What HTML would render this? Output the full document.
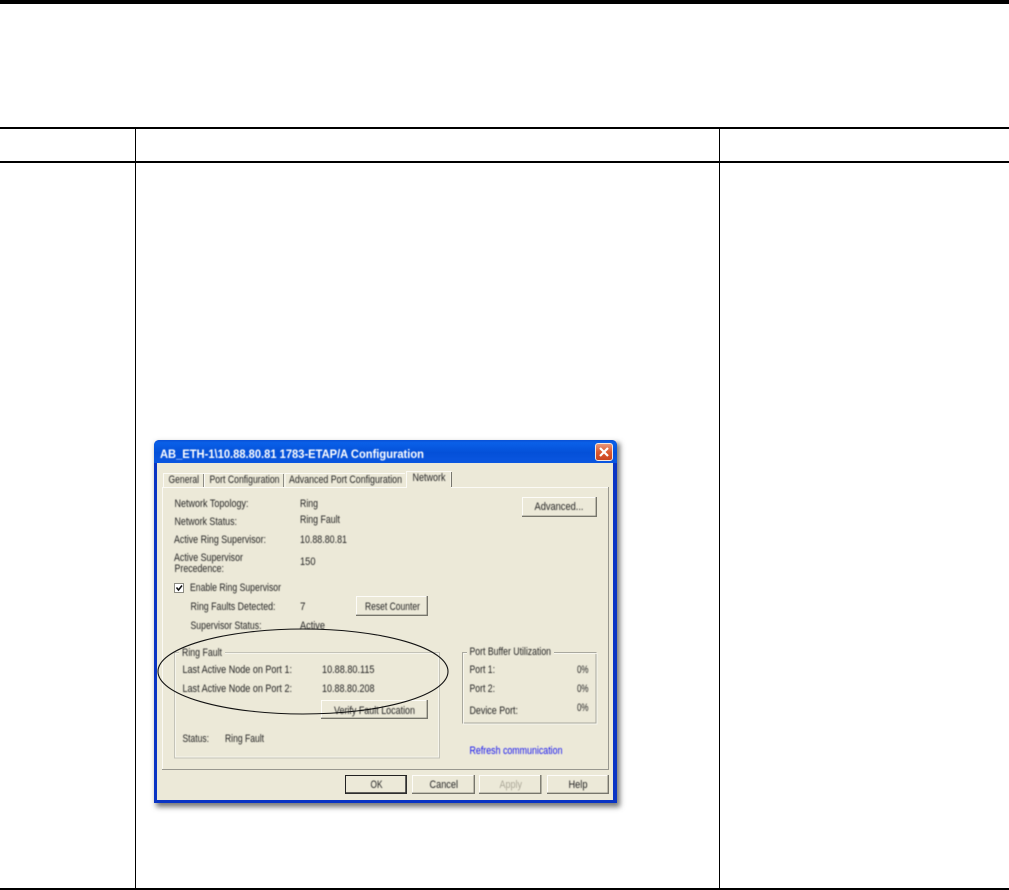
<!DOCTYPE html>
<html>
<head>
<meta charset="utf-8">
<style>
html,body{margin:0;padding:0;background:#fff;}
body{width:1009px;height:890px;overflow:hidden;position:relative;}
svg{position:absolute;left:0;top:0;display:block;}
text{font-family:"Liberation Sans",sans-serif;font-size:11px;fill:#262626;}
</style>
</head>
<body>
<svg width="1009" height="890" viewBox="0 0 1009 890" xmlns="http://www.w3.org/2000/svg">
<defs>
<linearGradient id="tb" x1="0" y1="0" x2="0" y2="1">
<stop offset="0" stop-color="#0a50d4"/><stop offset=".12" stop-color="#0a60e8"/><stop offset=".55" stop-color="#0450d8"/><stop offset="1" stop-color="#0a56e0"/>
</linearGradient>
<linearGradient id="cl" x1="0" y1="0" x2="0" y2="1">
<stop offset="0" stop-color="#e89a80"/><stop offset=".5" stop-color="#dc5a30"/><stop offset="1" stop-color="#c8431f"/>
</linearGradient>
<filter id="sh" x="-5%" y="-5%" width="110%" height="110%"><feGaussianBlur stdDeviation="2.6"/></filter>
<filter id="sf" x="-2%" y="-20%" width="104%" height="140%"><feGaussianBlur stdDeviation="0.4"/></filter>
</defs>

<!-- page rules -->
<rect x="0" y="0" width="1009" height="4" fill="#000"/>
<rect x="0" y="127" width="1009" height="2" fill="#000"/>
<rect x="0" y="161" width="1009" height="2" fill="#000"/>
<rect x="0" y="888" width="1009" height="2" fill="#000"/>
<rect x="135" y="127" width="1" height="761" fill="#000"/>
<rect x="719" y="127" width="1" height="761" fill="#000"/>

<!-- window -->
<rect x="156" y="443" width="464" height="364" fill="#777" filter="url(#sh)"/>
<path d="M154 446q0-6 6-6H611q6 0 6 6V803H154Z" fill="#0a34c4"/>
<path d="M154 446q0-6 6-6H611q6 0 6 6V463H154Z" fill="url(#tb)"/>
<rect x="157" y="463" width="456" height="337" fill="#ece9d8"/>
<g filter="url(#sf)">
<text x="160" y="458" style="fill:#fff;font-size:12px;font-weight:bold" textLength="264" lengthAdjust="spacingAndGlyphs">AB_ETH-1\10.88.80.81 1783-ETAP/A Configuration</text>
</g>
<!-- close -->
<rect x="595.5" y="443.5" width="17" height="17" rx="2.5" fill="url(#cl)" stroke="#f4e8e0"/>
<path d="M600 448L608 456M608 448L600 456" stroke="#fff" stroke-width="2.2" fill="none"/>

<!-- tab panel -->
<rect x="162" y="487" width="447" height="282" fill="#ece9d8"/>
<path d="M162.500 769V487.500H608.500" fill="none" stroke="#fbfaf5"/>
<path d="M608.500 487V769.500H162" fill="none" stroke="#98978f"/>
<!-- tabs -->
<path d="M163.500 487V473.500H203.500V487" fill="#ece9d8" stroke="#fbfaf5"/>
<path d="M203.500 474V487" stroke="#8f8e86" fill="none"/>
<path d="M204.500 487V473.500H283.500" fill="#ece9d8" stroke="#fbfaf5"/>
<path d="M283.500 474V487" stroke="#8f8e86" fill="none"/>
<path d="M285 487V473.500H405" fill="#ece9d8" stroke="#fbfaf5"/>
<path d="M406.500 488V471.500H451V488" fill="#ece9d8" stroke="#fbfaf5"/>
<path d="M451.500 472V487" stroke="#77766e" fill="none"/>
<rect x="407" y="486" width="44" height="3" fill="#ece9d8"/>

<!-- group boxes -->
<rect x="174.500" y="652.500" width="265" height="105.500" fill="none" stroke="#c4c3b8"/>
<rect x="175.500" y="653.500" width="263" height="103.500" fill="none" stroke="#fbfaf5" stroke-opacity=".7"/>
<rect x="179" y="648" width="46" height="9" fill="#ece9d8"/>
<rect x="462.500" y="652.500" width="133.500" height="70.500" fill="none" stroke="#a9a89e"/>
<rect x="463.500" y="653.500" width="133.500" height="70.500" fill="none" stroke="#fbfaf5" stroke-opacity=".8"/>
<rect x="467" y="648" width="87" height="9" fill="#ece9d8"/>

<!-- buttons -->
<g fill="#ece9d8">
<rect x="522" y="497" width="75" height="20"/>
<rect x="356" y="596" width="72" height="20"/>
<rect x="321" y="700" width="107" height="19"/>
<rect x="412" y="775" width="63" height="19"/>
<rect x="479" y="775" width="62" height="19"/>
<rect x="547" y="775" width="62" height="19"/>
<rect x="345" y="775" width="62" height="19"/>
</g>
<g fill="none" stroke="#fdfcf8">
<path d="M522.500 516V497.500H596"/>
<path d="M356.500 615V596.500H427"/>
<path d="M321.500 718V700.500H427"/>
<path d="M412.500 793V775.500H474"/>
<path d="M479.500 793V775.500H540"/>
<path d="M547.500 793V775.500H608"/>
</g>
<g fill="none" stroke="#77766c" stroke-width="1.400">
<path d="M596.300 497V516.300H522"/>
<path d="M427.300 596V615.300H356"/>
<path d="M427.300 700V718.300H321"/>
<path d="M474.300 775V793.300H412"/>
<path d="M540.800 775V793.300H479"/>
<path d="M608.300 775V793.300H547"/>
</g>
<rect x="345.500" y="775.500" width="61" height="18" fill="none" stroke="#222" stroke-width="1"/>
<path d="M406 776V793H346" fill="none" stroke="#333" stroke-width="1.500"/>

<!-- checkbox -->
<rect x="174.500" y="583.500" width="9" height="9" fill="#fff" stroke="#8c8b82"/>
<path d="M176.500 587.500L178.500 590L182 585.500" fill="none" stroke="#111" stroke-width="1.500"/>

<!-- labels -->
<g filter="url(#sf)">
<text x="168.500" y="483" textLength="30.500" lengthAdjust="spacingAndGlyphs">General</text>
<text x="209.500" y="483" textLength="70" lengthAdjust="spacingAndGlyphs">Port Configuration</text>
<text x="289" y="483" textLength="113" lengthAdjust="spacingAndGlyphs">Advanced Port Configuration</text>
<text x="412.500" y="481" textLength="33" lengthAdjust="spacingAndGlyphs">Network</text>

<text x="174.500" y="507" textLength="74" lengthAdjust="spacingAndGlyphs">Network Topology:</text>
<text x="300" y="507" textLength="18" lengthAdjust="spacingAndGlyphs">Ring</text>
<text x="174.500" y="525" textLength="62.500" lengthAdjust="spacingAndGlyphs">Network Status:</text>
<text x="300" y="523" textLength="40" lengthAdjust="spacingAndGlyphs">Ring Fault</text>
<text x="174" y="543" textLength="92" lengthAdjust="spacingAndGlyphs">Active Ring Supervisor:</text>
<text x="300" y="543" textLength="47" lengthAdjust="spacingAndGlyphs">10.88.80.81</text>
<text x="174" y="561" textLength="69" lengthAdjust="spacingAndGlyphs">Active Supervisor</text>
<text x="174.500" y="572" textLength="49.500" lengthAdjust="spacingAndGlyphs">Precedence:</text>
<text x="300" y="565" textLength="15.500" lengthAdjust="spacingAndGlyphs">150</text>
<text x="190" y="591" textLength="91" lengthAdjust="spacingAndGlyphs">Enable Ring Supervisor</text>
<text x="190.500" y="610" textLength="85" lengthAdjust="spacingAndGlyphs">Ring Faults Detected:</text>
<text x="300" y="610" textLength="5.500" lengthAdjust="spacingAndGlyphs">7</text>
<text x="190.500" y="629" textLength="71" lengthAdjust="spacingAndGlyphs">Supervisor Status:</text>
<text x="300" y="629" textLength="25" lengthAdjust="spacingAndGlyphs">Active</text>

<text x="534.500" y="510" textLength="49" lengthAdjust="spacingAndGlyphs">Advanced...</text>
<text x="365" y="610" textLength="55" lengthAdjust="spacingAndGlyphs">Reset Counter</text>

<text x="182" y="656" textLength="40" lengthAdjust="spacingAndGlyphs">Ring Fault</text>
<text x="182.500" y="673" textLength="109.500" lengthAdjust="spacingAndGlyphs">Last Active Node on Port 1:</text>
<text x="322" y="673" textLength="52.500" lengthAdjust="spacingAndGlyphs">10.88.80.115</text>
<text x="182.500" y="692" textLength="109.500" lengthAdjust="spacingAndGlyphs">Last Active Node on Port 2:</text>
<text x="322" y="692" textLength="52.500" lengthAdjust="spacingAndGlyphs">10.88.80.208</text>
<text x="334" y="714" textLength="81" lengthAdjust="spacingAndGlyphs">Verify Fault Location</text>
<text x="182.500" y="742" textLength="26.500" lengthAdjust="spacingAndGlyphs">Status:</text>
<text x="225" y="742" textLength="39" lengthAdjust="spacingAndGlyphs">Ring Fault</text>

<text x="469.500" y="655" textLength="81.500" lengthAdjust="spacingAndGlyphs">Port Buffer Utilization</text>
<text x="469.500" y="673" textLength="25.500" lengthAdjust="spacingAndGlyphs">Port 1:</text>
<text x="577" y="673" textLength="11.500" lengthAdjust="spacingAndGlyphs">0%</text>
<text x="469.500" y="692" textLength="25.500" lengthAdjust="spacingAndGlyphs">Port 2:</text>
<text x="577" y="692" textLength="11.500" lengthAdjust="spacingAndGlyphs">0%</text>
<text x="469.500" y="714" textLength="48.500" lengthAdjust="spacingAndGlyphs">Device Port:</text>
<text x="577" y="711" textLength="11.500" lengthAdjust="spacingAndGlyphs">0%</text>
<text x="469.500" y="754" textLength="93" lengthAdjust="spacingAndGlyphs" style="fill:#1515f0">Refresh communication</text>

<text x="370.500" y="788" textLength="12" lengthAdjust="spacingAndGlyphs">OK</text>
<text x="429.500" y="788" textLength="28.500" lengthAdjust="spacingAndGlyphs">Cancel</text>
<text x="499.500" y="788" textLength="22.500" lengthAdjust="spacingAndGlyphs" style="fill:#aca899">Apply</text>
<text x="568.500" y="788" textLength="19" lengthAdjust="spacingAndGlyphs">Help</text>
</g>

<!-- ellipse annotation -->
<ellipse cx="303" cy="671.500" rx="145" ry="42.500" fill="none" stroke="#111" stroke-width="1.100"/>
</svg>
</body>
</html>
